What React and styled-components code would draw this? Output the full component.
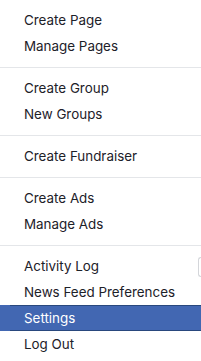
import React from 'react'
import styled, { createGlobalStyle } from 'styled-components'

const GlobalStyle = createGlobalStyle`
  html, body {
    margin: 0;
    padding: 0;
    background: #fff;
  }
  body {
    font-family: Inter, 'Liberation Sans', Arial, sans-serif;
    -webkit-font-smoothing: antialiased;
  }
`;

const Menu = styled.ul`
  list-style: none;
  margin: 0;
  padding: 7px 0 0;
  width: 201px;
  height: 361px;
  overflow: hidden;
  background: #fff;
`;

const Item = styled.li`
  position: relative;
  height: 26px;
  display: flex;
  align-items: center;
  padding-left: 24px;
  font-size: 13.4px;
  color: ${p => (p.$active ? '#fff' : '#1d2129')};
  background: ${p => (p.$active ? '#4267b2' : 'transparent')};
  box-sizing: border-box;
  white-space: nowrap;
  cursor: pointer;
  ${p => p.$active && `
    &::before, &::after {
      content: '';
      position: absolute;
      left: 10px;
      right: 0;
      height: 1px;
      background: #29487d;
    }
    &::before { top: 0; }
    &::after { bottom: 0; }
  `}
`;

const Edge = styled.span`
  position: absolute;
  right: 0;
  top: 4px;
  width: 3px;
  height: 20px;
  border: 1px solid #d4d6da;
  border-right: none;
  border-radius: 3px 0 0 3px;
  box-sizing: border-box;
`;

const Separator = styled.li`
  height: 1px;
  margin: 8px 0 7px;
  background: #e4e6e9;
`;

export default function App() {
  return (
    <>
      <GlobalStyle />
      <Menu>
        <Item>Create Page</Item>
        <Item>Manage Pages</Item>
        <Separator />
        <Item>Create Group</Item>
        <Item>New Groups</Item>
        <Separator />
        <Item>Create Fundraiser</Item>
        <Separator />
        <Item>Create Ads</Item>
        <Item>Manage Ads</Item>
        <Separator />
        <Item>Activity Log<Edge /></Item>
        <Item>News Feed Preferences</Item>
        <Item $active>Settings</Item>
        <Item>Log Out</Item>
      </Menu>
    </>
  )
}
